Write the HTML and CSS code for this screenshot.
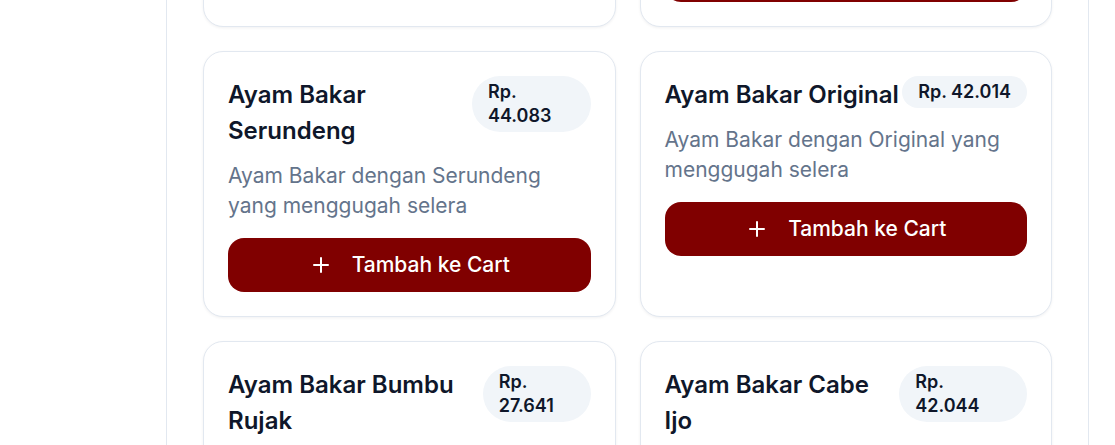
FILE: index.html
```html
<!DOCTYPE html>
<html lang="id">
<head>
<meta charset="utf-8">
<title>Menu Ayam Bakar</title>
<link rel="stylesheet" href="styles.css">
</head>
<body>
<main class="shell">
  <section class="menu-grid">
    <article class="card">
      <div class="card-head">
        <h3 class="card-title">Ayam Bakar Madu</h3>
        <span class="price">Rp. 38.500</span>
      </div>
      <p class="card-desc">Ayam Bakar dengan Madu yang menggugah selera</p>
      <button class="add-btn" type="button">
        <svg class="plus" viewBox="0 0 24 24" width="24" height="24" aria-hidden="true"><path d="M5 12h14M12 5v14"/></svg>
        <span>Tambah ke Cart</span>
      </button>
    </article>
    <article class="card">
      <div class="card-head">
        <h3 class="card-title">Ayam Bakar Kecap Pedas</h3>
        <span class="price">Rp. 35.210</span>
      </div>
      <p class="card-desc">Ayam Bakar dengan Kecap Pedas yang menggugah selera</p>
      <button class="add-btn" type="button">
        <svg class="plus" viewBox="0 0 24 24" width="24" height="24" aria-hidden="true"><path d="M5 12h14M12 5v14"/></svg>
        <span>Tambah ke Cart</span>
      </button>
    </article>

    <article class="card">
      <div class="card-head">
        <h3 class="card-title">Ayam Bakar Serundeng</h3>
        <span class="price">Rp. 44.083</span>
      </div>
      <p class="card-desc">Ayam Bakar dengan Serundeng yang menggugah selera</p>
      <button class="add-btn" type="button">
        <svg class="plus" viewBox="0 0 24 24" width="24" height="24" aria-hidden="true"><path d="M5 12h14M12 5v14"/></svg>
        <span>Tambah ke Cart</span>
      </button>
    </article>
    <article class="card">
      <div class="card-head">
        <h3 class="card-title">Ayam Bakar Original</h3>
        <span class="price">Rp. 42.014</span>
      </div>
      <p class="card-desc">Ayam Bakar dengan Original yang menggugah selera</p>
      <button class="add-btn" type="button">
        <svg class="plus" viewBox="0 0 24 24" width="24" height="24" aria-hidden="true"><path d="M5 12h14M12 5v14"/></svg>
        <span>Tambah ke Cart</span>
      </button>
    </article>

    <article class="card">
      <div class="card-head">
        <h3 class="card-title">Ayam Bakar Bumbu Rujak</h3>
        <span class="price">Rp. 27.641</span>
      </div>
      <p class="card-desc">Ayam Bakar dengan Bumbu Rujak yang menggugah selera</p>
      <button class="add-btn" type="button">
        <svg class="plus" viewBox="0 0 24 24" width="24" height="24" aria-hidden="true"><path d="M5 12h14M12 5v14"/></svg>
        <span>Tambah ke Cart</span>
      </button>
    </article>
    <article class="card">
      <div class="card-head">
        <h3 class="card-title">Ayam Bakar Cabe Ijo</h3>
        <span class="price">Rp. 42.044</span>
      </div>
      <p class="card-desc">Ayam Bakar dengan Cabe Ijo yang menggugah selera</p>
      <button class="add-btn" type="button">
        <svg class="plus" viewBox="0 0 24 24" width="24" height="24" aria-hidden="true"><path d="M5 12h14M12 5v14"/></svg>
        <span>Tambah ke Cart</span>
      </button>
    </article>
  </section>
</main>
</body>
</html>
```
FILE: styles.css
```css
* {
  box-sizing: border-box;
}

html,
body {
  margin: 0;
  height: 100%;
  overflow: hidden;
  background: #ffffff;
}

body {
  font-family: Inter, "Noto Sans", sans-serif;
  color: #0f172a;
}

.shell {
  margin-left: 166px;
  width: 923px;
  min-height: 100%;
  padding: 0 36px;
  border-left: 1px solid #e2e8f0;
  border-right: 1px solid #e2e8f0;
}

.menu-grid {
  display: grid;
  grid-template-columns: 1fr 1fr;
  gap: 24px;
  margin-top: -239px;
}

.card {
  display: flex;
  flex-direction: column;
  align-items: stretch;
  padding: 24px;
  border: 1px solid #e2e8f0;
  border-radius: 20px;
  background: #ffffff;
  box-shadow: 0 1px 3px rgba(15, 23, 42, 0.06);
}

.card-head {
  display: flex;
  justify-content: space-between;
  align-items: flex-start;
}

.card-title {
  margin: 0;
  padding-top: 1px;
  font-size: 24px;
  line-height: 36px;
  font-weight: 600;
  color: #0f172a;
}

.price {
  padding: 4px 16px;
  border-radius: 9999px;
  background: #f1f5f9;
  color: #0f172a;
  font-size: 18px;
  line-height: 24px;
  font-weight: 600;
}

.card-desc {
  margin: 12px 0 0;
  font-size: 21px;
  line-height: 30px;
  color: #64748b;
}

.add-btn {
  display: flex;
  align-items: center;
  justify-content: center;
  gap: 19px;
  margin-top: 17px;
  height: 54px;
  border: 0;
  border-radius: 16px;
  background: #800000;
  color: #ffffff;
  font-family: inherit;
  font-size: 21px;
  font-weight: 500;
  line-height: 30px;
}

.plus {
  flex: none;
  fill: none;
  stroke: #ffffff;
  stroke-width: 2;
  stroke-linecap: round;
}
```
